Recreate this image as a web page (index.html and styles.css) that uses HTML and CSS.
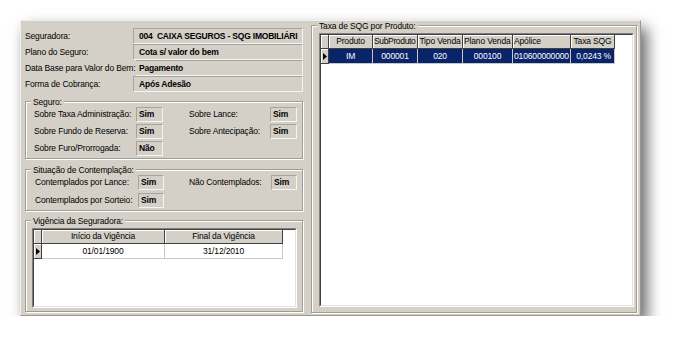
FILE: index.html
```html
<!DOCTYPE html>
<html>
<head>
<meta charset="utf-8">
<link rel="stylesheet" href="styles.css">
</head>
<body>
<div class="window">
  <div class="left">
    <div class="fields">
      <div class="frow"><span class="flabel">Seguradora:</span><span class="fval">004&nbsp; CAIXA SEGUROS - SQG IMOBILIÁRI</span></div>
      <div class="frow"><span class="flabel">Plano do Seguro:</span><span class="fval">Cota s/ valor do bem</span></div>
      <div class="frow wide"><span class="flabel">Data Base para Valor do Bem:</span><span class="fval">Pagamento</span></div>
      <div class="frow"><span class="flabel">Forma de Cobrança:</span><span class="fval">Após Adesão</span></div>
    </div>

    <div class="group g-seguro">
      <div class="gtitle">Seguro:</div>
      <div class="pairs">
        <span class="lbl">Sobre Taxa Administração:</span><span class="box">Sim</span><span></span><span class="lbl">Sobre Lance:</span><span class="box">Sim</span>
        <span class="lbl">Sobre Fundo de Reserva:</span><span class="box">Sim</span><span></span><span class="lbl">Sobre Antecipação:</span><span class="box">Sim</span>
        <span class="lbl">Sobre Furo/Prorrogada:</span><span class="box">Não</span>
      </div>
    </div>

    <div class="group g-sit">
      <div class="gtitle">Situação de Contemplação:</div>
      <div class="pairs">
        <span class="lbl">Contemplados por Lance:</span><span class="box">Sim</span><span></span><span class="lbl">Não Contemplados:</span><span class="box">Sim</span>
        <span class="lbl">Contemplados por Sorteio:</span><span class="box">Sim</span>
      </div>
    </div>

    <div class="group g-vig">
      <div class="gtitle">Vigência da Seguradora:</div>
      <div class="dbgrid vig-grid">
        <div class="dbgrid-in">
          <div class="grow">
            <div class="hcell ind"></div>
            <div class="hcell c-ini">Início da Vigência</div>
            <div class="hcell c-fim">Final da Vigência</div>
          </div>
          <div class="grow">
            <div class="dcell ind cur"><svg width="4" height="7" viewBox="0 0 4 7"><polygon points="0,0 4,3.5 0,7" fill="#000"/></svg></div>
            <div class="dcell c-ini">01/01/1900</div>
            <div class="dcell c-fim">31/12/2010</div>
          </div>
        </div>
      </div>
    </div>
  </div>

  <div class="group g-taxa">
    <div class="gtitle">Taxa de SQG por Produto:</div>
    <div class="dbgrid taxa-grid">
      <div class="dbgrid-in">
        <div class="grow">
          <div class="hcell ind"></div>
          <div class="hcell c-prod">Produto</div>
          <div class="hcell c-sub tight">SubProduto</div>
          <div class="hcell c-tipo">Tipo Venda</div>
          <div class="hcell c-plano al">Plano Venda</div>
          <div class="hcell c-apol al">Apólice</div>
          <div class="hcell c-taxa">Taxa SQG</div>
        </div>
        <div class="grow sel">
          <div class="dcell ind cur"><svg width="4" height="7" viewBox="0 0 4 7"><polygon points="0,0 4,3.5 0,7" fill="#000"/></svg></div>
          <div class="dcell c-prod">IM</div>
          <div class="dcell c-sub">000001</div>
          <div class="dcell c-tipo">020</div>
          <div class="dcell c-plano">000100</div>
          <div class="dcell c-apol al">010600000000</div>
          <div class="dcell c-taxa ar">0,0243 %</div>
        </div>
      </div>
    </div>
  </div>
</div>
</body>
</html>
```

FILE: styles.css
```css
html, body {
  margin: 0;
  background: #fff;
}
body {
  font-family: "Liberation Sans", Arial, sans-serif;
  font-size: 8.5px;
  letter-spacing: -0.15px;
  color: #000;
}
.window {
  margin: 20px 0 0 20px;
  width: 621px;
  height: 296px;
  box-sizing: border-box;
  background: #d4d0c8;
  border: 1px solid;
  border-color: #efeee9 #9a978f #9a978f #efeee9;
  padding: 4px 3px 2px 4px;
  display: flex;
  gap: 8px;
  box-shadow: 6px 8px 14px rgba(0, 0, 0, 0.6);
}
.left {
  width: 278px;
  display: flex;
  flex-direction: column;
  padding: 3px 0 1px;
  box-sizing: border-box;
}
.frow {
  display: flex;
  height: 16px;
}
.flabel {
  width: 108px;
  flex: none;
  line-height: 16px;
  white-space: nowrap;
}
.fval {
  flex: 1;
  min-width: 0;
  border: 1px solid;
  border-color: #a7a49c #f5f4f0 #f5f4f0 #a7a49c;
  font-weight: bold;
  letter-spacing: -0.2px;
  line-height: 14px;
  padding-left: 5px;
  overflow: hidden;
  white-space: nowrap;
}
.frow.wide .flabel { width: 111px; }
.frow.wide .fval { border-left: none; padding-left: 3px; }

.group {
  border: 1px solid #a09d95;
  box-shadow: inset 1px 1px 0 #fff, 1px 1px 0 #fff;
  box-sizing: border-box;
}
.gtitle {
  width: fit-content;
  margin: -5px 0 0 5px;
  padding: 0 2px;
  height: 10px;
  line-height: 10px;
  background: #d4d0c8;
  white-space: nowrap;
}
.g-seguro { margin-top: 9px; }
.pairs {
  display: grid;
  grid-auto-rows: 15px;
}
.g-seguro .pairs {
  grid-template-columns: 102px 27px 26px 81px 27px;
  row-gap: 2px;
  padding: 0 0 2px 8px;
}
.g-sit { margin-top: 10px; }
.g-sit .pairs {
  grid-template-columns: 103px 26px 25px 82px 26px;
  row-gap: 3px;
  padding: 0 0 2px 9px;
}
.lbl {
  line-height: 15px;
  white-space: nowrap;
}
.box {
  border: 1px solid;
  border-color: #a7a49c #f5f4f0 #f5f4f0 #a7a49c;
  font-weight: bold;
  line-height: 13px;
  padding-left: 2px;
  box-sizing: border-box;
  height: 15px;
}
.g-vig {
  margin-top: 9px;
  flex: 1;
  display: flex;
  flex-direction: column;
}
.vig-grid {
  flex: 1;
  margin: 2px 5px 3px 6px;
}
.g-taxa {
  flex: 1;
  display: flex;
  flex-direction: column;
}
.taxa-grid {
  flex: 1;
  margin: 2px 2px 5px 7px;
}
.dbgrid {
  border: 1px solid;
  border-color: #808080 #ffffff #ffffff #808080;
  background: #fff;
  display: flex;
}
.dbgrid-in {
  flex: 1;
  border: 1px solid;
  border-color: #404040 #e4e2dc #e4e2dc #404040;
  background: #fff;
}
.grow {
  display: flex;
}
.hcell {
  height: 14px;
  box-sizing: border-box;
  background: #d4d0c8;
  border-right: 1px solid #404040;
  border-bottom: 1px solid #404040;
  box-shadow: inset 1px 1px 0 #fff;
  text-align: center;
  line-height: 13px;
  white-space: nowrap;
  overflow: hidden;
  flex: none;
}
.hcell.tight {
  text-align: left;
  padding-left: 1px;
  letter-spacing: -0.35px;
}
.dcell {
  height: 15px;
  box-sizing: border-box;
  border-right: 1px solid #c8c8c8;
  border-bottom: 1px solid #c8c8c8;
  line-height: 14px;
  text-align: center;
  white-space: nowrap;
  overflow: hidden;
  flex: none;
}
.al { text-align: left; padding-left: 1px; }
.ar { text-align: right; padding-right: 3px; }
.ind { width: 8px; }
.dcell.cur {
  background: #d4d0c8;
  border-right: 1px solid #404040;
  border-bottom: 1px solid #404040;
  box-shadow: inset 1px 1px 0 #fff;
  display: flex;
  align-items: center;
  padding-left: 2px;
}
.dcell.cur svg { display: block; }
.c-ini { width: 123px; }
.c-fim { width: 118px; }
.c-prod { width: 44px; }
.c-sub { width: 45px; }
.c-tipo { width: 45px; }
.c-plano { width: 50px; }
.c-apol { width: 58px; }
.c-taxa { width: 44px; }
.sel .dcell:not(.cur) {
  background: #0a246a;
  color: #fff;
  border-right-color: #c8c8c8;
}
```
